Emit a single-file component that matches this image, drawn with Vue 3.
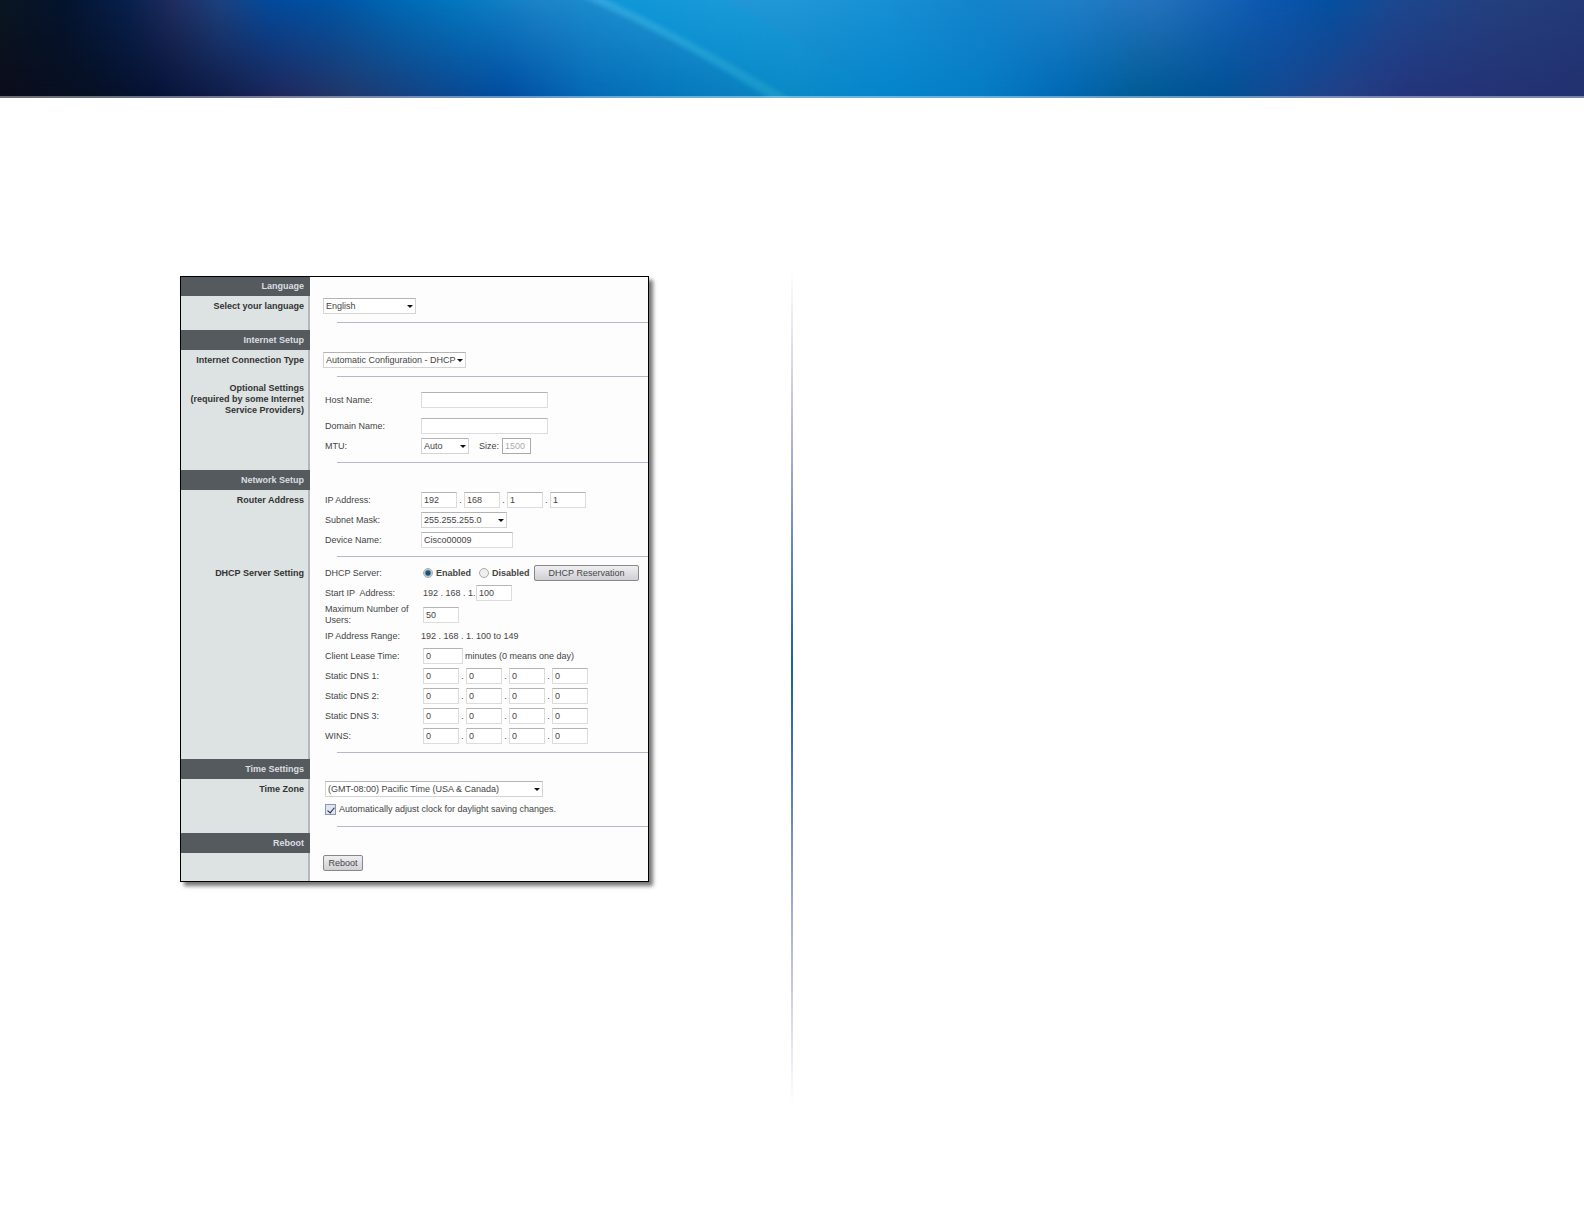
<script setup>
import { ref } from 'vue'

const quads = ['Static DNS 1:', 'Static DNS 2:', 'Static DNS 3:', 'WINS:']
const routerIp = ['192', '168', '1', '1']
const dhcp = ref('enabled')
const daylight = ref(true)
</script>

<template>
  <div class="page">
    <header class="banner">
      <div class="tone tone-top"></div>
      <div class="tone tone-bottom"></div>
      <svg class="streak" viewBox="0 0 1584 97" preserveAspectRatio="none" aria-hidden="true">
        <defs>
          <linearGradient id="ray" x1="0" y1="0" x2="0" y2="1">
            <stop offset="0" stop-color="#4cb8ec" stop-opacity=".5" />
            <stop offset="1" stop-color="#2fb0c8" stop-opacity=".35" />
          </linearGradient>
          <linearGradient id="glow" x1="0" y1="0" x2="1" y2="0">
            <stop offset="0" stop-color="#0ca0e0" stop-opacity=".5" />
            <stop offset="1" stop-color="#18a0e0" stop-opacity="0" />
          </linearGradient>
          <filter id="soft" x="-10%" y="-10%" width="120%" height="120%">
            <feGaussianBlur stdDeviation="2" />
          </filter>
        </defs>
        <path d="M590 -4 Q690 45 770 101 L890 101 Q800 40 720 -4Z" fill="url(#glow)" filter="url(#soft)" />
        <path d="M580 -4 Q690 45 776 101 L796 101 Q700 43 600 -4Z" fill="url(#ray)" filter="url(#soft)" />
      </svg>
    </header>

    <main class="columns">
      <section class="left">
        <form class="panel" @submit.prevent>
          <section class="block block-first">
            <h2 class="title">Language</h2>
            <div class="group">
              <h3 class="side"><label for="lang">Select your language</label></h3>
              <div class="fields">
                <div class="row">
                  <span class="pick w-lang"><select id="lang"><option>English</option></select></span>
                </div>
                <hr />
              </div>
            </div>
          </section>

          <section class="block">
            <h2 class="title">Internet Setup</h2>
            <div class="group">
              <h3 class="side"><label for="conn">Internet Connection Type</label></h3>
              <div class="fields">
                <div class="row">
                  <span class="pick w-conn"><select id="conn"><option>Automatic Configuration - DHCP</option></select></span>
                </div>
                <hr />
              </div>
            </div>
            <div class="group">
              <h3 class="side side-multi">Optional Settings<br />(required by some Internet<br />Service Providers)</h3>
              <div class="fields optional">
                <div class="row">
                  <label class="name" for="host">Host Name:</label>
                  <input id="host" class="w-host" type="text" />
                </div>
                <div class="row spaced">
                  <label class="name" for="domain">Domain Name:</label>
                  <input id="domain" class="w-host" type="text" />
                </div>
                <div class="row">
                  <label class="name" for="mtu">MTU:</label>
                  <span class="pick w-mtu"><select id="mtu"><option>Auto</option></select></span>
                  <label class="size" for="size">Size:</label>
                  <input id="size" class="w-size" type="text" value="1500" disabled />
                </div>
                <hr />
              </div>
            </div>
          </section>

          <section class="block">
            <h2 class="title">Network Setup</h2>
            <div class="group">
              <h3 class="side">Router Address</h3>
              <div class="fields">
                <div class="row">
                  <label class="name" for="ip-0">IP Address:</label>
                  <template v-for="(part, i) in routerIp" :key="i">
                    <span v-if="i" class="dot">.</span>
                    <input :id="'ip-' + i" class="w-octet" type="text" :value="part" :aria-label="'IP address part ' + (i + 1)" />
                  </template>
                </div>
                <div class="row">
                  <label class="name" for="mask">Subnet Mask:</label>
                  <span class="pick w-mask"><select id="mask"><option>255.255.255.0</option></select></span>
                </div>
                <div class="row">
                  <label class="name" for="device">Device Name:</label>
                  <input id="device" class="w-device" type="text" value="Cisco00009" />
                </div>
                <hr />
              </div>
            </div>
            <div class="group">
              <h3 class="side">DHCP Server Setting</h3>
              <div class="fields">
                <div class="row">
                  <span class="name">DHCP Server:</span>
                  <div class="choices inset">
                    <label><input v-model="dhcp" type="radio" name="dhcp" value="enabled" />Enabled</label>
                    <label><input v-model="dhcp" type="radio" name="dhcp" value="disabled" />Disabled</label>
                    <button class="reserve" type="button">DHCP Reservation</button>
                  </div>
                </div>
                <div class="row">
                  <label class="name" for="start">Start IP&nbsp; Address:</label>
                  <span class="inset prefix">192 . 168 . 1.</span>
                  <input id="start" class="w-octet" type="text" value="100" />
                </div>
                <div class="row row-double">
                  <label class="name" for="users">Maximum Number of<br />Users:</label>
                  <input id="users" class="w-octet inset" type="text" value="50" />
                </div>
                <div class="row">
                  <span class="name">IP Address Range:</span>
                  <span>192 . 168 . 1. 100 to 149</span>
                </div>
                <div class="row">
                  <label class="name" for="lease">Client Lease Time:</label>
                  <input id="lease" class="w-lease inset" type="text" value="0" />
                  <span class="unit">minutes (0 means one day)</span>
                </div>
                <div v-for="(name, q) in quads" :key="name" class="row">
                  <label class="name" :for="'q' + q + '-1'">{{ name }}</label>
                  <div class="octets inset">
                    <template v-for="i in 4" :key="i">
                      <span v-if="i > 1" class="dot">.</span>
                      <input :id="'q' + q + '-' + i" class="w-octet" type="text" value="0" :aria-label="name + ' part ' + i" />
                    </template>
                  </div>
                </div>
                <hr />
              </div>
            </div>
          </section>

          <section class="block">
            <h2 class="title">Time Settings</h2>
            <div class="group">
              <h3 class="side"><label for="zone">Time Zone</label></h3>
              <div class="fields">
                <div class="row">
                  <span class="pick w-zone"><select id="zone"><option>(GMT-08:00) Pacific Time (USA &amp; Canada)</option></select></span>
                </div>
                <div class="row row-tick">
                  <label class="tick"><input v-model="daylight" type="checkbox" />Automatically adjust clock for daylight saving changes.</label>
                </div>
                <hr />
              </div>
            </div>
          </section>

          <section class="block">
            <h2 class="title">Reboot</h2>
            <div class="group last">
              <div class="side"></div>
              <div class="fields">
                <div class="row"><button class="reboot" type="button">Reboot</button></div>
              </div>
            </div>
          </section>
        </form>
      </section>
      <div class="divider"></div>
      <section class="right"></section>
    </main>
  </div>
</template>

<style>
body {
  margin: 0;
  background: #fff;
}
</style>

<style scoped>
.page {
  min-height: 100vh;
  font-family: "Liberation Sans", Arial, sans-serif;
  font-size: 9px;
  line-height: 11px;
  color: #444;
}

.banner {
  position: relative;
  height: 98px;
  overflow: hidden;
}
.banner::after {
  content: '';
  position: absolute;
  inset: auto 0 0;
  height: 2px;
  background: rgb(255 255 255 / 40%);
}
.tone,
.streak {
  position: absolute;
  inset: 0;
  width: 100%;
  height: 100%;
}
.tone-top {
  background: linear-gradient(90deg, #0a1622 0%, #04142e 4%, #08204c 8%, #202e60 11%, #1c4280 14%, #044a9c 17%, #0054a4 21%, #0068b4 25%, #0478c0 29%, #1c84c8 34%, #1c90d0 39%, #2398d6 45%, #2098d8 50%, #1890d4 56%, #1484cc 62%, #1e80c8 67%, #2472bc 73%, #0c58b0 80%, #0450a0 84%, #1c4890 88%, #24407e 94%, #233a78 100%);
}
.tone-bottom {
  background: linear-gradient(90deg, #0c0c1a 0%, #061024 6%, #061236 10%, #101c48 14%, #20285c 18%, #20386c 22%, #104488 27%, #004ca0 32%, #0468b4 37%, #0478bc 43%, #0c84c0 50%, #0484cc 56%, #047cc4 62%, #0068b4 67%, #005a94 72%, #005094 77%, #144890 81%, #243e84 85%, #24347a 89%, #22306e 100%);
  mask-image: linear-gradient(180deg, transparent, #000);
}

.columns {
  display: grid;
  grid-template-columns: 1fr 2px 1fr;
}
.left {
  padding: 178px 0 60px 180px;
}
.divider {
  height: 836px;
  margin-top: 170px;
  background: linear-gradient(180deg, #fff, #d8d4e4 12%, #b8b4d4 20%, #6c8cc0 32%, #1c6494 47%, #1c6a90 50%, #4874ac 59%, #8c9cc8 72%, #ccc8e0 86%, #fff);
}

.panel {
  box-sizing: border-box;
  width: 469px;
  border: 1px solid #000;
  background: #fdfdfd;
  box-shadow: 4px 4px 4px #777;
}
.block-first {
  display: flex;
  flex-direction: column;
  min-height: 53px;
}
.block-first .title {
  height: 19px;
  line-height: 19px;
}
.block-first .group {
  flex: 1;
}
.title {
  box-sizing: border-box;
  width: 129px;
  height: 20px;
  margin: 0;
  padding-right: 6px;
  background: #555a5f;
  color: #dcdee0;
  font-size: 9px;
  line-height: 20px;
  font-weight: 700;
  text-align: right;
}
.group {
  display: flex;
}
.side {
  box-sizing: border-box;
  flex: none;
  width: 129px;
  margin: 0;
  padding-right: 4px;
  border-right: 2px solid #b4b8b8;
  background: #dde2e2;
  color: #333;
  font-size: 9px;
  line-height: 20px;
  font-weight: 700;
  text-align: right;
  white-space: nowrap;
}
.side-multi {
  line-height: 11px;
}
.fields {
  flex: 1;
  min-width: 0;
  padding-left: 15px;
}
.optional {
  padding: 7px 0 1px 15px;
}
.row {
  display: flex;
  align-items: center;
  height: 20px;
  white-space: nowrap;
}
.row.spaced {
  padding-top: 6px;
}
.row-double {
  height: 23px;
}
.row-tick {
  height: 21px;
}
.name {
  flex: none;
  width: 96px;
}
hr {
  height: 1px;
  margin: 6px 0 6px 12px;
  border: 0;
  background: #b4b8c8;
}
.last {
  height: 28px;
}

input,
select,
button {
  box-sizing: border-box;
  margin: 0;
  font: inherit;
  color: #444;
}
input[type='text'] {
  height: 16px;
  padding: 0 2px;
  border: 1px solid #dcdcdc;
  border-top-color: #b4b4b4;
  background: #fff;
}
input[type='text']:disabled {
  border-color: #aaa;
  color: #aaa;
}
.pick {
  position: relative;
  display: inline-block;
  height: 16px;
}
.pick select {
  display: block;
  width: 100%;
  height: 16px;
  padding: 0 2px;
  border: 1px solid #d4d4d4;
  border-top-color: #b4b4b4;
  border-radius: 0;
  background: #fff;
  appearance: none;
}
.pick::after {
  content: '';
  position: absolute;
  right: 3px;
  top: 7px;
  border: 3px solid transparent;
  border-top-color: #111;
  border-bottom: 0;
  pointer-events: none;
}
.w-lang { width: 93px; margin-left: -2px; }
.w-conn { width: 143px; margin-left: -2px; }
.w-zone { width: 218px; }
.w-host { width: 127px; }
.w-mtu { width: 48px; }
.w-mask { width: 86px; }
.w-device { width: 92px; }
.w-octet { width: 36px; }
.w-lease { width: 40px; }
.w-size { width: 29px; }
.size {
  width: 23px;
  margin-left: 10px;
}
.dot {
  width: 7px;
  text-align: center;
}
.inset {
  margin-left: 2px;
}
.octets,
.choices {
  display: flex;
  align-items: center;
}
.choices label {
  display: flex;
  align-items: center;
  gap: 3px;
  width: 56px;
  font-weight: 700;
}
.prefix {
  width: 53px;
}
.unit {
  margin-left: 2px;
}
input[type='radio'] {
  width: 10px;
  height: 10px;
  border: 1px solid #aaa;
  border-radius: 50%;
  background: #eee;
  appearance: none;
}
input[type='radio']:checked {
  background: radial-gradient(circle, #1c4f70 0 2px, #7fa6bd 3px, #dde6ea 4px);
}
button {
  height: 16px;
  padding: 0;
  border: 1px solid #888;
  border-radius: 2px;
  background: linear-gradient(180deg, #f0f0f2, #cfcfd4);
}
.reserve {
  width: 105px;
  margin-left: -1px;
}
.reboot {
  width: 40px;
  margin-left: -2px;
}
.tick {
  display: flex;
  align-items: center;
  gap: 3px;
}
input[type='checkbox'] {
  display: grid;
  place-items: center;
  width: 11px;
  height: 11px;
  border: 1px solid #8c98b0;
  background: #dfe4f0;
  appearance: none;
}
input[type='checkbox']:checked::after {
  content: '';
  box-sizing: border-box;
  width: 4px;
  height: 7px;
  border: solid #223;
  border-width: 0 1px 1px 0;
  transform: rotate(40deg);
}
</style>
